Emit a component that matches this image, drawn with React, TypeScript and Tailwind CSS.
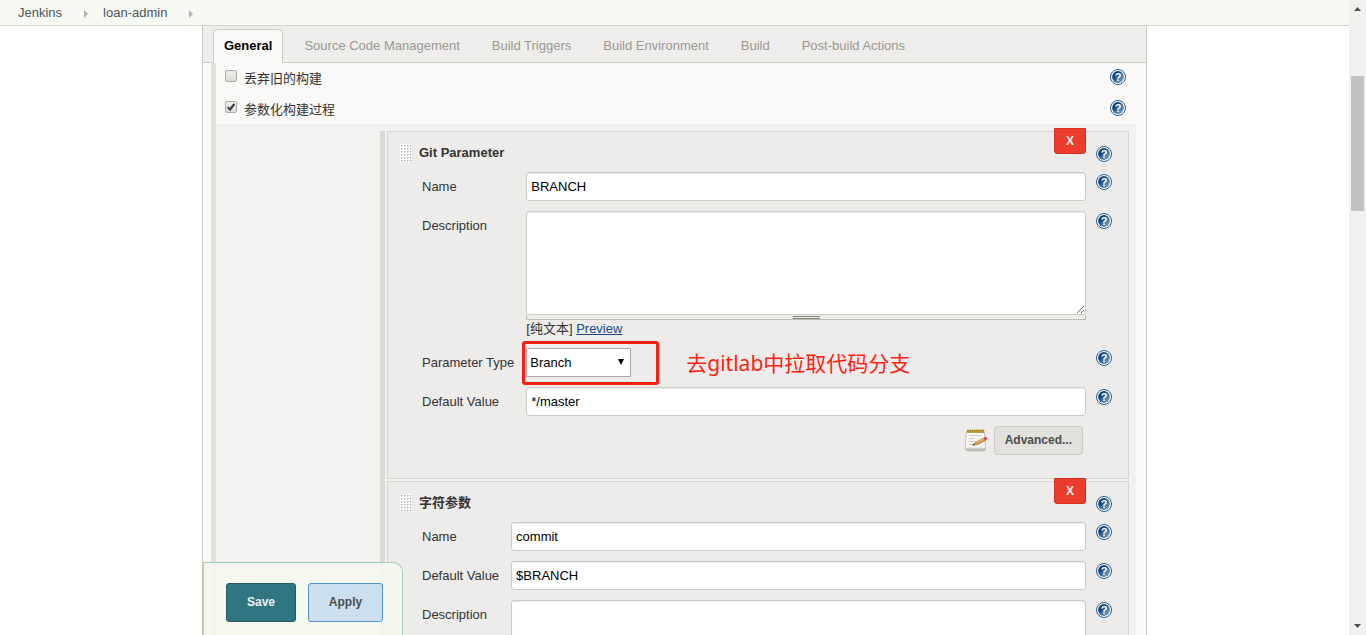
import React from 'react';

interface HelpProps {
  topic: string;
}

const HelpLink: React.FC<HelpProps> = ({ topic }) => (
  <a href="#help" aria-label={`Help: ${topic}`} className="block size-4 shrink-0">
    <svg viewBox="0 0 16 16" className="block size-4">
      <defs>
        <linearGradient id="helpFill" x1="0" y1="0" x2="1" y2="1">
          <stop offset="0.3" stopColor="#0f4377" />
          <stop offset="1" stopColor="#8fb6da" />
        </linearGradient>
      </defs>
      <circle cx="8" cy="8" r="7.5" fill="#fff" stroke="#1f5c8f" strokeWidth="1" />
      <circle cx="8" cy="8" r="5.9" fill="url(#helpFill)" />
      <text x="8" y="12" textAnchor="middle" fill="#fff" fontSize="11" fontWeight="bold" fontFamily="Liberation Sans, sans-serif">
        ?
      </text>
    </svg>
  </a>
);

const NotepadIcon: React.FC = () => (
  <svg viewBox="0 0 24 24" className="size-6 shrink-0" aria-hidden="true">
    <ellipse cx="12" cy="21.4" rx="10" ry="1.2" fill="#b9b8b4" />
    <path d="M2.5 2.5h18l1 18H1z" fill="#f7f7f5" stroke="#b5b4ae" strokeWidth="0.8" />
    <path d="M1.2 18.8h20.2v1.8H1z" fill="#c9c8c2" />
    <path d="M3 0.8h17v3H3z" fill="#c4a534" />
    <path d="M4 0.6v3.4M6.2 0.6v3.4M8.4 0.6v3.4M10.6 0.6v3.4M12.8 0.6v3.4M15 0.6v3.4M17.2 0.6v3.4M19.4 0.6v3.4" stroke="#8f7820" strokeWidth="0.7" />
    <path d="M4.5 6.5h13M4.5 9.5h6M4.5 12.5h8M4.5 15.5h4" stroke="#c9c9c6" strokeWidth="1" />
    <path d="M9 16l3-3 8-4 1.6 2.6-8.6 4.2z" fill="#e0943a" stroke="#a5691f" strokeWidth="0.6" />
    <path d="M11.6 14.2l8.6-4.2" stroke="#f6c07a" strokeWidth="0.8" />
    <path d="M7.8 16.6l2-2 1 1.4z" fill="#3c3226" />
    <path d="M19.8 8.8l1.5-.7c1.5-.4 2.4 1.5 1.2 2.5l-1.3.7z" fill="#e03030" />
  </svg>
);

const DragHandle: React.FC = () => (
  <svg viewBox="0 0 12 18" className="h-[18px] w-3 shrink-0" aria-hidden="true">
    <defs>
      <pattern id="dots" width="3" height="3" patternUnits="userSpaceOnUse">
        <path d="M1 1h2v1H2v1H1z" fill="#d6d5d0" />
        <path d="M1 1h1v1H1z" fill="#b4b3ad" />
      </pattern>
    </defs>
    <path d="M0 0h12v18H0z" fill="#fff" />
    <path d="M0 0h12v18H0z" fill="url(#dots)" />
  </svg>
);

interface OptionRowProps {
  id: string;
  label: string;
  checked?: boolean;
}

const OptionRow: React.FC<OptionRowProps> = ({ id, label, checked }) => (
  <div className="flex h-[31px] items-start pr-5 pl-[9px] pt-1.5">
    <span className="relative mt-px mr-[7px] block size-3">
      <input
        id={id}
        type="checkbox"
        defaultChecked={checked}
        className="peer block size-3 appearance-none rounded-xs border border-[#acaba6] bg-linear-to-b from-[#ededeb] to-[#dcdcda]"
      />
      <svg viewBox="0 0 12 12" className="pointer-events-none absolute inset-0 hidden size-3 peer-checked:block">
        <path d="M2.8 6.2l2.2 2.3L9.3 3" fill="none" stroke="#404040" strokeWidth="2.2" />
      </svg>
    </span>
    <label htmlFor={id} className="leading-5">
      {label}
    </label>
    <span className="ml-auto">
      <HelpLink topic={label} />
    </span>
  </div>
);

interface RowProps {
  label: string;
  id: string;
  children: React.ReactNode;
}

// One line of a settings block: label, control, help icon
const Row: React.FC<RowProps> = ({ label, id, children }) => (
  <>
    <label htmlFor={id} className="h-7 pr-0.5 leading-[30px] whitespace-nowrap">
      {label}
    </label>
    <div className="min-w-0">{children}</div>
    <div className="pt-0.5">
      <HelpLink topic={label} />
    </div>
  </>
);

const fieldClass =
  'block w-full rounded-[3px] border border-[#ccccc6] bg-white px-1 text-black shadow-[inset_0_1px_1px_rgba(0,0,0,0.08)]';

const TextField: React.FC<{ id: string; value: string }> = ({ id, value }) => (
  <input id={id} type="text" defaultValue={value} className={`${fieldClass} h-[29px]`} />
);

interface BlockProps {
  title: string;
  children: React.ReactNode;
}

const ParameterBlock: React.FC<BlockProps> = ({ title, children }) => (
  <section className="relative border border-[#d6d5d2] bg-[#eeecea] pr-4 pb-[23px] pl-3">
    <button
      type="button"
      aria-label={`Delete ${title}`}
      className="absolute -top-1 right-[42px] h-[26px] w-8 rounded-b-[3px] border border-[#d33020] bg-[#ea3d2c] text-xs font-bold text-[#f4ecea]"
    >
      X
    </button>
    <header className="flex h-10 items-start pt-3">
      <DragHandle />
      <h2 className="ml-[7px] leading-[18px] font-bold">{title}</h2>
      <span className="mt-0.5 ml-auto">
        <HelpLink topic={title} />
      </span>
    </header>
    <div className="grid grid-cols-[auto_1fr_auto] gap-x-2.5 gap-y-2.5 pl-[22px]">{children}</div>
  </section>
);

const Scrollbar: React.FC = () => (
  <div className="flex w-[17px] shrink-0 flex-col items-center bg-[#f1f1f0]" aria-hidden="true">
    <svg viewBox="0 0 17 17" className="size-[17px] shrink-0">
      <path d="M5 11l3.5-4 3.5 4z" fill="#505050" />
    </svg>
    <div className="grow-59" />
    <div className="w-[13px] grow-135 bg-[#c1c1bf]" />
    <div className="grow-407" />
    <svg viewBox="0 0 17 17" className="size-[17px] shrink-0">
      <path d="M5 6l3.5 4L12 6z" fill="#505050" />
    </svg>
  </div>
);

const CrumbArrow: React.FC = () => (
  <svg viewBox="0 0 4 8" className="mt-0.5 h-2 w-1" aria-hidden="true">
    <path d="M0 0l4 4-4 4z" fill="#b4b3ac" />
  </svg>
);

const tabs = ['General', 'Source Code Management', 'Build Triggers', 'Build Environment', 'Build', 'Post-build Actions'];

const App: React.FC = () => {
  return (
    <div className="flex h-screen overflow-hidden bg-white font-['Liberation_Sans','Noto_Sans_CJK_SC',sans-serif] text-[13px] text-[#333]">
      <div className="flex min-w-0 flex-1 flex-col">
        <nav className="flex h-[26px] shrink-0 items-center border-b border-[#d3d7cb] bg-[#f6faf2] pl-[18px] text-[#4d545d]">
          <a href="#jenkins" className="mr-[22px]">Jenkins</a>
          <CrumbArrow />
          <a href="#loan-admin" className="mr-[22px] ml-[15px]">loan-admin</a>
          <CrumbArrow />
        </nav>

        <main className="relative mx-[202px] flex min-h-0 flex-1 flex-col overflow-hidden border-x border-[#ccccc4] bg-[#faf9f7]">
          <div role="tablist" className="flex h-[37px] shrink-0 items-end gap-2.5 border-b border-[#ccccc4] bg-[#eeedeb] pl-2.5">
            {tabs.map((tab, i) => (
              <button
                key={tab}
                type="button"
                role="tab"
                aria-selected={i === 0}
                className={
                  i === 0
                    ? '-mb-px h-[34px] rounded-t-[5px] border border-b-0 border-[#ccccc4] bg-[#faf9f7] px-2.5 pb-0.5 font-bold text-black'
                    : 'h-[33px] border border-b-0 border-transparent px-2.5 text-[#999892]'
                }
              >
                {tab}
              </button>
            ))}
          </div>

          <form className="ml-2 flex flex-1 border-l-5 border-[#e0dfdc]">
            <div className="min-w-0 flex-1">
              <OptionRow id="discard" label="丢弃旧的构建" />
              <OptionRow id="parameterized" label="参数化构建过程" checked />

              <div className="mr-2.5 -mt-px bg-[#f3f2f1] pt-[7px] pr-[7px] pl-[164px]">
                <div className="flex flex-col gap-0.5 border-l-5 border-[#dbdad7] pl-0.5">
                  <ParameterBlock title="Git Parameter">
                    <Row label="Name" id="git-name">
                      <TextField id="git-name" value="BRANCH" />
                    </Row>
                    <Row label="Description" id="git-desc">
                      <textarea id="git-desc" className={`${fieldClass} h-[104px]`} />
                      <div className="flex h-[5px] justify-center border border-t-0 border-[#bdbdb3]">
                        <div className="mt-px h-[3px] w-[27px] border-y border-[#85857a]" />
                      </div>
                      <div className="h-[18px] leading-[18px]">
                        [纯文本]{' '}
                        <a href="#preview" className="text-[#204a87] underline">Preview</a>
                      </div>
                    </Row>
                    <Row label="Parameter Type" id="git-type">
                      <div className="relative w-[105px]">
                        <select
                          id="git-type"
                          className="block h-[29px] w-full appearance-none rounded-[1px] border border-[#a9a9a9] bg-white px-[3px] text-black"
                        >
                          <option>Branch</option>
                        </select>
                        <svg viewBox="0 0 8 6" className="pointer-events-none absolute top-[11px] right-1.5 h-1.5 w-2">
                          <path d="M1 0h6L4 6z" fill="#000" />
                        </svg>
                        {/* callout around the select */}
                        <div className="pointer-events-none absolute -top-[7px] -left-1 h-11 w-[137px] rounded-[3px] border-3 border-[#ff1f12]" />
                        <p className="absolute top-0 left-40 font-['Noto_Sans','Noto_Sans_CJK_SC',sans-serif] text-[21px] leading-[30px] whitespace-nowrap text-[#ff1f12]">
                          去gitlab中拉取代码分支
                        </p>
                      </div>
                    </Row>
                    <Row label="Default Value" id="git-default">
                      <TextField id="git-default" value="*/master" />
                    </Row>
                    <div className="col-start-2 flex items-center justify-end gap-1.5 pr-[3px]">
                      <NotepadIcon />
                      <button
                        type="button"
                        className="h-[29px] rounded-[3px] border border-[#ccccc4] bg-[#e2e1dd] px-2.5 pb-0.5 text-xs font-bold text-[#4d4d4d]"
                      >
                        Advanced...
                      </button>
                    </div>
                  </ParameterBlock>

                  <ParameterBlock title="字符参数">
                    <Row label="Name" id="str-name">
                      <TextField id="str-name" value="commit" />
                    </Row>
                    <Row label="Default Value" id="str-default">
                      <TextField id="str-default" value="$BRANCH" />
                    </Row>
                    <Row label="Description" id="str-desc">
                      <textarea id="str-desc" className={`${fieldClass} h-[104px]`} />
                    </Row>
                  </ParameterBlock>
                </div>
              </div>
            </div>
          </form>

          <div className="absolute bottom-0 left-0 flex gap-3 rounded-tr-[10px] border border-b-0 border-[#a1cfb8] bg-[#f4f8ee]/90 pt-5 pr-[19px] pb-[13px] pl-[22px] text-xs font-bold">
            <button type="button" className="h-[39px] w-[70px] rounded-[3px] border border-[#285a64] bg-[#2f7682] pb-0.5 text-[#eef4f4]">
              Save
            </button>
            <button type="button" className="h-[39px] w-[75px] rounded-[3px] border border-[#5296cc] bg-[#cbdfee] pb-0.5 text-[#4d4d4d]">
              Apply
            </button>
          </div>
        </main>
      </div>
      <Scrollbar />
    </div>
  );
};

export default App;
